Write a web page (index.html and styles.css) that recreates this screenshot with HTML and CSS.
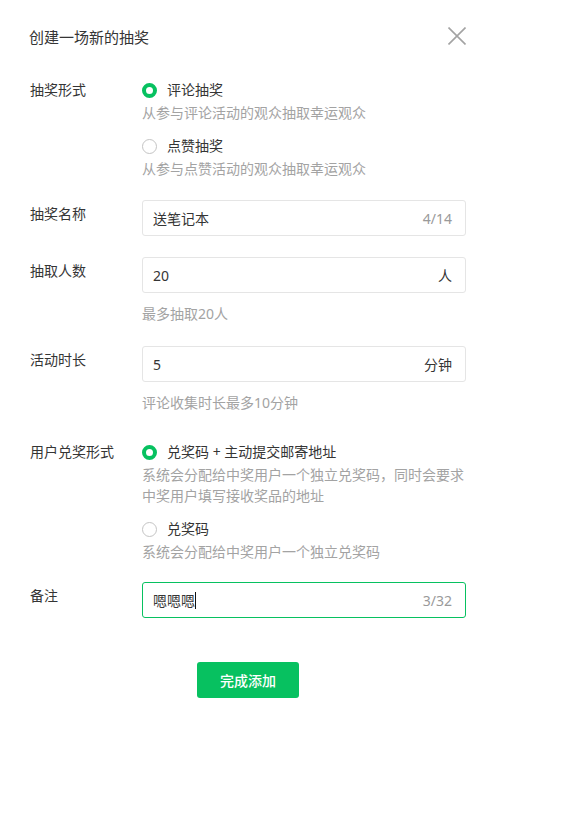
FILE: index.html
```html
<!DOCTYPE html>
<html lang="zh-CN">
<head>
<meta charset="utf-8">
<title>创建一场新的抽奖</title>
<link rel="stylesheet" href="styles.css">
</head>
<body>
<div class="dialog">
  <div class="header">
    <h1 class="title">创建一场新的抽奖</h1>
    <button class="close" aria-label="关闭">
      <svg width="18" height="18" viewBox="0 0 18 18"><path d="M0.5 0.5 L17.5 17.5 M17.5 0.5 L0.5 17.5" stroke="#a3a3a3" stroke-width="1.6" fill="none"/></svg>
    </button>
  </div>

  <div class="form">
    <div class="row">
      <div class="label">抽奖形式</div>
      <div class="field">
        <div class="option">
          <div class="opt-title"><span class="radio checked"></span>评论抽奖</div>
          <div class="desc">从参与评论活动的观众抽取幸运观众</div>
        </div>
        <div class="option">
          <div class="opt-title"><span class="radio"></span>点赞抽奖</div>
          <div class="desc">从参与点赞活动的观众抽取幸运观众</div>
        </div>
      </div>
    </div>

    <div class="row row-input">
      <div class="label">抽奖名称</div>
      <div class="field">
        <div class="input"><span class="value">送笔记本</span><span class="counter">4/14</span></div>
      </div>
    </div>

    <div class="row row-input">
      <div class="label">抽取人数</div>
      <div class="field">
        <div class="input"><span class="value">20</span><span class="unit">人</span></div>
        <div class="hint">最多抽取20人</div>
      </div>
    </div>

    <div class="row row-input row-time">
      <div class="label">活动时长</div>
      <div class="field">
        <div class="input"><span class="value">5</span><span class="unit">分钟</span></div>
        <div class="hint">评论收集时长最多10分钟</div>
      </div>
    </div>

    <div class="row row-user">
      <div class="label">用户兑奖形式</div>
      <div class="field">
        <div class="option">
          <div class="opt-title"><span class="radio checked"></span>兑奖码 + 主动提交邮寄地址</div>
          <div class="desc">系统会分配给中奖用户一个独立兑奖码，同时会要求中奖用户填写接收奖品的地址</div>
        </div>
        <div class="option">
          <div class="opt-title"><span class="radio"></span>兑奖码</div>
          <div class="desc">系统会分配给中奖用户一个独立兑奖码</div>
        </div>
      </div>
    </div>

    <div class="row row-input row-remark">
      <div class="label">备注</div>
      <div class="field">
        <div class="input focused"><span class="value">嗯嗯嗯<span class="caret"></span></span><span class="counter">3/32</span></div>
      </div>
    </div>
  </div>

  <div class="actions">
    <button class="btn">完成添加</button>
  </div>
</div>
</body>
</html>
```

FILE: styles.css
```css
html, body {
  margin: 0;
  padding: 0;
  background: #ffffff;
}

body {
  font-family: "Noto Sans", "Noto Sans CJK SC", sans-serif;
  font-size: 14px;
  color: #353535;
}

.dialog {
  width: 436px;
  padding: 26px 0 60px 30px;
}

.header {
  display: flex;
  justify-content: space-between;
  align-items: center;
  height: 22px;
}

.title {
  margin: 0 0 0 -1px;
  font-size: 15px;
  font-weight: normal;
  line-height: 22px;
  color: #353535;
}

.close {
  width: 18px;
  height: 18px;
  padding: 0;
  border: 0;
  background: none;
  display: block;
  margin-top: -2px;
}

.close svg {
  display: block;
}

.form {
  margin-top: 31px;
  display: flex;
  flex-direction: column;
  gap: 21px;
}

.row {
  display: flex;
}

.label {
  width: 112px;
  flex: none;
  font-size: 14px;
  line-height: 22px;
  color: #353535;
}

.row-input .label {
  padding-top: 3px;
}

.field {
  width: 324px;
  display: flex;
  flex-direction: column;
}

.option + .option {
  margin-top: 12px;
}

.opt-title {
  display: flex;
  align-items: center;
  line-height: 22px;
  color: #353535;
}

.desc {
  margin-top: 1px;
  line-height: 21px;
  color: #a3a3a3;
}

.radio {
  box-sizing: border-box;
  width: 15px;
  height: 15px;
  border-radius: 50%;
  border: 1px solid #c4c4c4;
  background: #fff;
  margin-right: 10px;
  flex: none;
}

.radio.checked {
  border: 4px solid #07c160;
}

.input {
  box-sizing: border-box;
  height: 36px;
  width: 324px;
  border: 1px solid #e5e5e5;
  border-radius: 3px;
  display: flex;
  align-items: center;
  padding: 0 13px 0 10px;
  color: #353535;
}

.input.focused {
  border-color: #07c160;
}

.value {
  flex: 1;
  display: flex;
  align-items: center;
}

.caret {
  display: inline-block;
  width: 1px;
  height: 17px;
  background: #111;
  margin-left: 0;
}

.counter {
  color: #9a9a9a;
}

.unit {
  color: #353535;
}

.hint {
  margin-top: 10px;
  line-height: 21px;
  color: #a3a3a3;
}

.row-time {
  margin-top: 1px;
}

.row-user {
  margin-top: 7px;
}

.row-remark {
  margin-top: -1px;
}

.actions {
  margin-top: 44px;
  display: flex;
  justify-content: center;
}

.btn {
  width: 102px;
  height: 36px;
  border: 0;
  border-radius: 3px;
  background: #07c160;
  color: #ffffff;
  font-family: "Noto Sans", "Noto Sans CJK SC", sans-serif;
  font-size: 14px;
  font-weight: 500;
  padding: 0;
}
```
